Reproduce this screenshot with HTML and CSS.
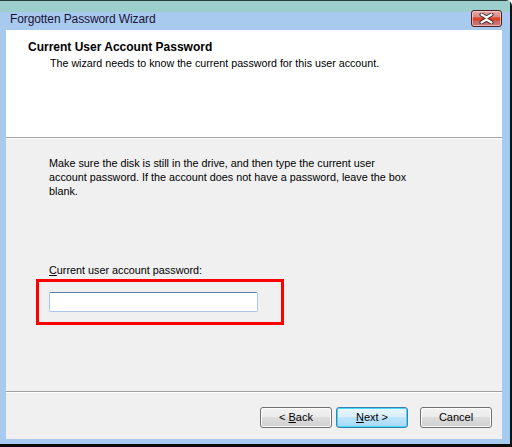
FILE: index.html
```html
<!DOCTYPE html>
<html>
<head>
<meta charset="utf-8">
<link rel="stylesheet" href="styles.css">
</head>
<body>
<div class="window">
  <div class="titlebar">
    <span class="title">Forgotten Password Wizard</span>
    <div class="close">
      <svg width="17" height="11" viewBox="0 0 17 11">
        <path d="M3.5 1.5 L8.5 4.5 L13.5 1.5 M3.5 9.5 L8.5 6.5 L13.5 9.5" fill="none" stroke="#3a2020" stroke-width="4" stroke-linecap="round" stroke-linejoin="round"/>
        <path d="M3.5 1.5 L8.5 4.5 L13.5 1.5 M3.5 9.5 L8.5 6.5 L13.5 9.5" fill="none" stroke="#ffffff" stroke-width="2.2" stroke-linecap="round" stroke-linejoin="round"/>
      </svg>
    </div>
  </div>
  <div class="client">
    <div class="header">
      <div class="h-title">Current User Account Password</div>
      <div class="h-sub">The wizard needs to know the current password for this user account.</div>
    </div>
    <div class="body">
      <p class="info">Make sure the disk is still in the drive, and then type the current user account password. If the account does not have a password, leave the box blank.</p>
      <label class="label"><u>C</u>urrent user account password:</label>
      <div class="highlight">
        <input class="field" type="password">
      </div>
    </div>
    <div class="buttons">
      <button class="btn">&lt; <u>B</u>ack</button>
      <button class="btn default"><u>N</u>ext &gt;</button>
      <button class="btn cancel">Cancel</button>
    </div>
  </div>
</div>
</body>
</html>
```
FILE: styles.css
```css
* { box-sizing: border-box; }
html, body { margin: 0; padding: 0; background: #ffffff; }
body { width: 512px; height: 447px; overflow: hidden; font-family: "Liberation Sans", Arial, sans-serif; }

.window {
  width: 512px;
  height: 447px;
  background: #a8caee;
  border-top: 1px solid #2a3a3a;
  border-right: 2px solid #101418;
  border-bottom: 3px solid #0c0c0c;
  border-top-right-radius: 6px;
  display: flex;
  flex-direction: column;
  box-shadow: inset -1px 0 0 #7fd6ea;
}

.titlebar {
  height: 29px;
  flex: none;
  background: linear-gradient(#9ccfcc 0, #9ccfcc 11px, #a8caee 11px);
  display: flex;
  align-items: flex-start;
  justify-content: space-between;
  padding: 0 8px 0 10px;
}
.title {
  margin-top: 11px;
  font-size: 12px;
  line-height: 14px;
  color: #1a1238;
  letter-spacing: -0.1px;
}
.close {
  margin-top: 9px;
  width: 31px;
  height: 17px;
  border: 1px solid #4a2020;
  border-radius: 3px;
  background: linear-gradient(#e6a9a6 0%, #d98a86 40%, #d9462c 45%, #d9462c 62%, #c86a6a 68%, #c97878 100%);
  box-shadow: inset 0 0 0 1px rgba(255,220,220,0.6);
  display: flex;
  align-items: center;
  justify-content: center;
}
.close svg { display: block; }

.client {
  margin-left: 6px;
  width: 496px;
  height: 409px;
  flex: none;
  background: #f0f0f0;
  display: flex;
  flex-direction: column;
}

.header {
  height: 108px;
  flex: none;
  background: #ffffff;
  border-bottom: 1px solid #a0a0a0;
  box-shadow: 0 1px 0 #ffffff;
  padding: 10px 0 0 22px;
}
.h-title {
  font-size: 12px;
  font-weight: bold;
  line-height: 15px;
  color: #000;
}
.h-sub {
  margin-top: 1px;
  padding-left: 22px;
  font-size: 10.7px;
  line-height: 14px;
  color: #000;
}

.body {
  flex: 1;
  padding: 18px 0 0 43px;
  border-bottom: 1px solid #a0a0a0;
  box-shadow: 0 1px 0 #ffffff;
  display: flex;
  flex-direction: column;
  align-items: flex-start;
}
.info {
  margin: 0;
  width: 366px;
  font-size: 10.8px;
  line-height: 14px;
  color: #000;
}
.label {
  margin-top: 65px;
  font-size: 10.8px;
  line-height: 14px;
  color: #000;
}
.highlight {
  margin-top: 2px;
  margin-left: -13px;
  width: 248px;
  height: 46px;
  border: 3px solid #ff0000;
  padding: 10px 0 0 10px;
}
.field {
  display: block;
  width: 209px;
  height: 20px;
  margin: 0;
  border: 1px solid #abc8ea;
  border-top-color: #5b7fa6;
  background: #fff;
  border-radius: 2px;
  outline: none;
}

.buttons {
  height: 47px;
  flex: none;
  display: flex;
  align-items: flex-start;
  justify-content: flex-end;
  padding: 15px 10px 0 0;
}
.btn {
  width: 72px;
  height: 21px;
  margin: 0;
  padding: 0;
  border: 1px solid #707070;
  border-radius: 3px;
  background: linear-gradient(#f2f2f2 0%, #ebebeb 45%, #dddddd 50%, #cfcfcf 100%);
  box-shadow: inset 0 0 0 1px #fcfcfc;
  font-family: "Liberation Sans", Arial, sans-serif;
  font-size: 11px;
  line-height: 17px;
  color: #000;
}
.btn + .btn { margin-left: 4px; }
.btn.cancel { margin-left: 12px; }
.btn.default {
  border-color: #3c7fb1;
  background: linear-gradient(#eaf6fd 0%, #d9f0fc 45%, #bee6fd 50%, #a7d9f5 100%);
  box-shadow: inset 0 0 0 1px #48d8fb;
}
```
